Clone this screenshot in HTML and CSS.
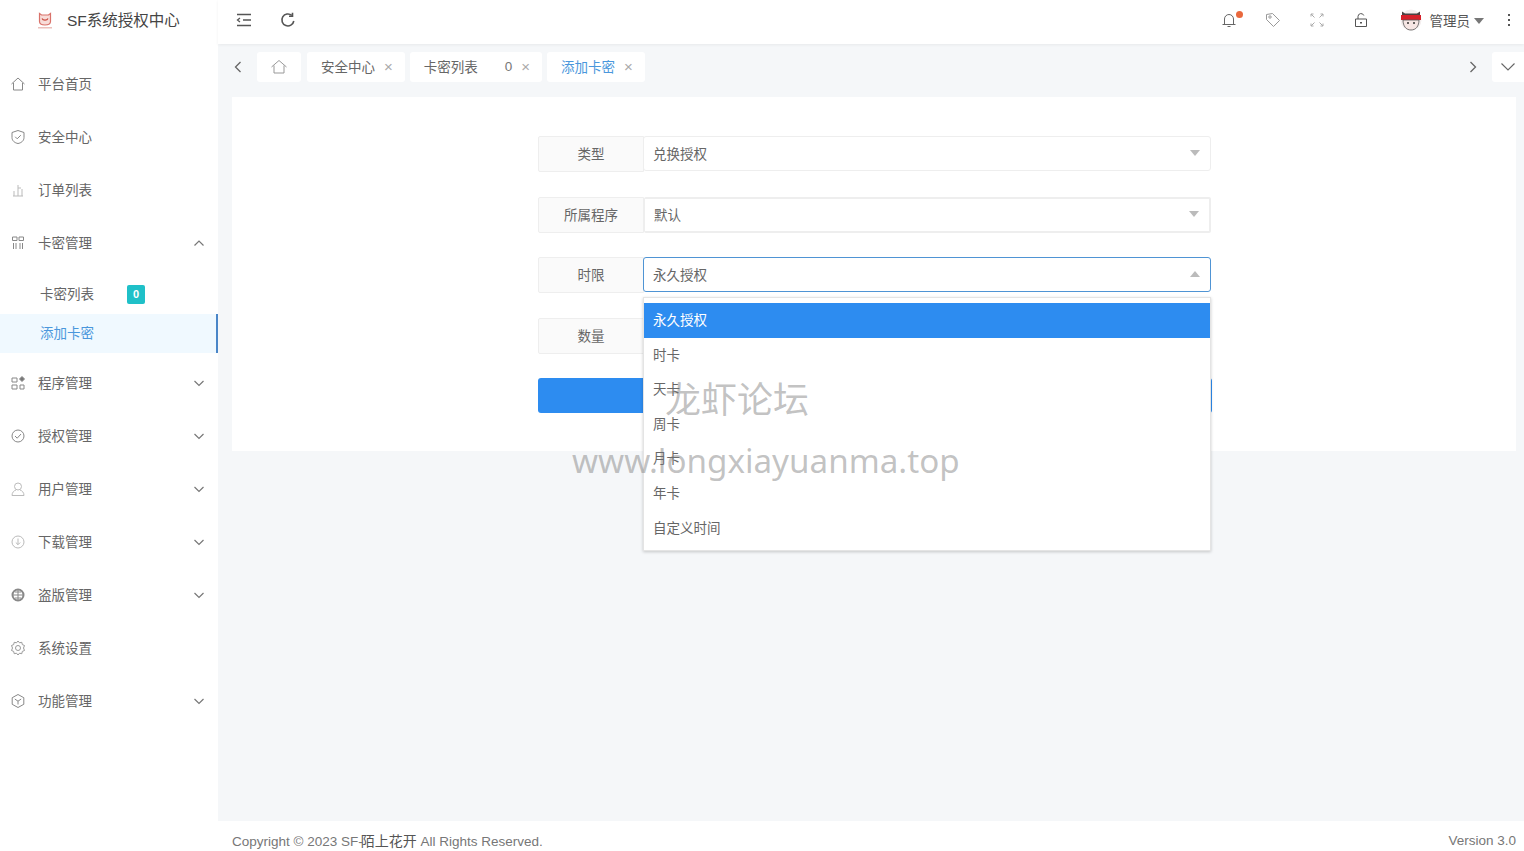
FILE: index.html
```html
<!DOCTYPE html>
<html lang="zh-CN">
<head>
    <meta charset="UTF-8">
    <meta name="viewport" content="width=device-width, initial-scale=1.0">
    <title>添加卡密</title>
    <link rel="stylesheet" href="styles.css">
</head>
<body>
    <div class="app">
        <aside class="sidebar">
            <div class="brand">
                <svg class="brand-logo" viewBox="0 0 18 18" width="18" height="18">
                    <path d="M3.500 1.500l2 1.500h7l2-1.500v8c0 2.500-2.500 3.500-5.500 3.500s-5.500-1-5.500-3.500z" fill="#f8dcd8" stroke="#d9726a" stroke-width="1.200"/>
                    <path d="M6 6.500c1 2.200 5 2.200 6 0" fill="none" stroke="#c8473c" stroke-width="1.200"/>
                    <rect x="2" y="15" width="14" height="1.500" fill="#ecc0bb"/>
                </svg>
                <span class="brand-name">SF系统授权中心</span>
            </div>
            <nav class="menu">
                <a class="menu-item">
                    <svg class="menu-icon" viewBox="0 0 16 16"><path d="M1.500 8L8 2l6.500 6M3.500 7v7h9V7"/></svg>
                    <span>平台首页</span>
                </a>
                <a class="menu-item">
                    <svg class="menu-icon" viewBox="0 0 16 16"><path d="M8 1.500l6 2v5c0 3.500-3 5.500-6 6-3-.5-6-2.500-6-6v-5z"/><path d="M5.200 7.800l2 2 3.600-3.600"/></svg>
                    <span>安全中心</span>
                </a>
                <a class="menu-item">
                    <svg class="menu-icon menu-icon-light" viewBox="0 0 16 16"><path d="M3 14h10M4 14V9M8 14V3M12 14V7M8 6h3"/></svg>
                    <span>订单列表</span>
                </a>
                <a class="menu-item">
                    <svg class="menu-icon" viewBox="0 0 16 16"><path d="M2.500 2h4.500v3.500H2.500zM9 2h4.500v3.500H9zM3.500 8v6M6 8v6M10 8v6M12.500 8v6"/></svg>
                    <span>卡密管理</span>
                    <svg class="chevron" viewBox="0 0 12 12"><path d="M1.500 8.500L6 4l4.500 4.500"/></svg>
                </a>
                <div class="submenu">
                    <a class="submenu-item"><span class="submenu-text">卡密列表</span><span class="badge">0</span></a>
                    <a class="submenu-item active"><span class="submenu-text">添加卡密</span></a>
                </div>
                <a class="menu-item">
                    <svg class="menu-icon" viewBox="0 0 16 16"><path d="M2 3h5v4H2zM2 10h5v4H2zM10 10h4v4h-4z"/><path class="icon-fill" d="M12 1.500l2.500 2.500-2.500 2.500L9.500 4z"/></svg>
                    <span>程序管理</span>
                    <svg class="chevron" viewBox="0 0 12 12"><path d="M1.500 4L6 8.500 10.500 4"/></svg>
                </a>
                <a class="menu-item">
                    <svg class="menu-icon" viewBox="0 0 16 16"><circle cx="8" cy="8" r="6"/><path d="M5 8l2.200 2.200L11 6"/></svg>
                    <span>授权管理</span>
                    <svg class="chevron" viewBox="0 0 12 12"><path d="M1.500 4L6 8.500 10.500 4"/></svg>
                </a>
                <a class="menu-item">
                    <svg class="menu-icon menu-icon-light" viewBox="0 0 16 16"><circle cx="8" cy="5.500" r="3.500"/><path d="M2 14.500c0-3 2-5 4-5.500M14 14.500c0-3-2-5-4-5.500M2 14.500h12"/></svg>
                    <span>用户管理</span>
                    <svg class="chevron" viewBox="0 0 12 12"><path d="M1.500 4L6 8.500 10.500 4"/></svg>
                </a>
                <a class="menu-item">
                    <svg class="menu-icon menu-icon-light" viewBox="0 0 16 16"><circle cx="8" cy="8" r="6"/><path d="M8 4.500v6M5.800 8.500L8 10.700l2.200-2.200"/></svg>
                    <span>下载管理</span>
                    <svg class="chevron" viewBox="0 0 12 12"><path d="M1.500 4L6 8.500 10.500 4"/></svg>
                </a>
                <a class="menu-item">
                    <svg class="menu-icon" viewBox="0 0 16 16"><circle cx="8" cy="8" r="5.500" stroke-width="2"/><path d="M3 8h10M8 3v10M5 5h6M5 11h6"/></svg>
                    <span>盗版管理</span>
                    <svg class="chevron" viewBox="0 0 12 12"><path d="M1.500 4L6 8.500 10.500 4"/></svg>
                </a>
                <a class="menu-item">
                    <svg class="menu-icon menu-icon-mid" viewBox="0 0 16 16"><circle cx="8" cy="8" r="2.500"/><path d="M8 1l1.500 1.800 2.300-.5.500 2.300 2.200.9-1 2.500 1 2.500-2.200.9-.5 2.300-2.300-.5L8 15l-1.500-1.800-2.300.5-.5-2.300-2.200-.9 1-2.500-1-2.500 2.200-.9.500-2.300 2.300.5z"/></svg>
                    <span>系统设置</span>
                </a>
                <a class="menu-item">
                    <svg class="menu-icon" viewBox="0 0 16 16"><path d="M8 1.500l5.800 3.200v6.600L8 14.500l-5.800-3.200V4.700z"/><path d="M4.800 6L8 8.200 11.200 6M8 8.200v3.300"/></svg>
                    <span>功能管理</span>
                    <svg class="chevron" viewBox="0 0 12 12"><path d="M1.500 4L6 8.500 10.500 4"/></svg>
                </a>
            </nav>
        </aside>

        <div class="main">
            <header class="topbar">
                <div class="topbar-group">
                    <span class="tool">
                        <svg class="tool-icon tool-dark tool-mid" viewBox="0 0 16 16"><path d="M1 2.500h14M7 8h8M1 13.500h14M4 6L1.500 8 4 10"/></svg>
                    </span>
                    <span class="tool">
                        <svg class="tool-icon tool-dark tool-bold" viewBox="0 0 16 16"><path d="M13.800 9A6 6 0 1 1 11.800 3.400"/><path d="M12.500 .8v3.500H9"/></svg>
                    </span>
                </div>
                <div class="topbar-group">
                    <span class="tool tool-bell">
                        <svg class="tool-icon tool-grey-dark" viewBox="0 0 16 16"><path d="M1.500 12.500h13M3.500 12.500V7a4.500 4.500 0 0 1 9 0v5.500M6.500 14.500h3"/></svg>
                        <i class="dot"></i>
                    </span>
                    <span class="tool">
                        <svg class="tool-icon tool-grey" viewBox="0 0 16 16"><path d="M1.500 2.500l6-1 7 7-6 6-7-7z"/><circle cx="5" cy="5" r="1.200"/></svg>
                    </span>
                    <span class="tool">
                        <svg class="tool-icon tool-light" viewBox="0 0 16 16"><path d="M2 2l3.500 3.500M2 2v2.500M2 2h2.500M14 2l-3.500 3.500M14 2v2.500M14 2h-2.500M2 14l3.500-3.500M2 14v-2.500M2 14h2.500M14 14l-3.500-3.500M14 14v-2.500M14 14h-2.500"/></svg>
                    </span>
                    <span class="tool">
                        <svg class="tool-icon tool-dark" viewBox="0 0 16 16"><path d="M2.500 7h11v7.500h-11zM5 7V4.500a3 3 0 0 1 5.800-1"/><path d="M8 10v1.500" stroke-width="2"/></svg>
                    </span>
                    <div class="user">
                        <svg class="avatar" viewBox="0 0 22 22">
                            <circle cx="11" cy="11" r="10.500" fill="#f4eeee"/>
                            <path d="M2 2.500l3 2h12l3-2v4H2z" fill="#4a4242"/>
                            <rect x="1" y="6" width="20" height="5" fill="#d5202a"/>
                            <path d="M3 11h16c0 6-3 10-8 10s-8-4-8-10z" fill="#f6e6e4" stroke="#555" stroke-width=".8"/>
                            <circle cx="8" cy="14" r="1" fill="#333"/>
                            <circle cx="14" cy="14" r="1" fill="#333"/>
                        </svg>
                        <span class="user-name">管理员</span>
                        <i class="caret"></i>
                    </div>
                    <span class="tool tool-more">
                        <i></i><i></i><i></i>
                    </span>
                </div>
            </header>

            <div class="tabsbar">
                <span class="tab-arrow">
                    <svg viewBox="0 0 12 12"><path d="M8.500 1L3.500 6l5 5"/></svg>
                </span>
                <div class="tabs">
                    <span class="tab tab-home">
                        <svg viewBox="0 0 16 16"><path d="M.5 8L8 1.500 15.500 8M3 6.500V14h10V6.500"/></svg>
                    </span>
                    <span class="tab"><span>安全中心</span><span class="tab-close">×</span></span>
                    <span class="tab">
                        <span>卡密列表</span><span class="tab-count">0</span><span class="tab-close">×</span>
                    </span>
                    <span class="tab tab-active"><span>添加卡密</span><span class="tab-close">×</span></span>
                </div>
                <span class="tab-arrow tab-arrow-right">
                    <svg viewBox="0 0 12 12"><path d="M3.500 1l5 5-5 5"/></svg>
                </span>
                <span class="tab-more">
                    <svg viewBox="0 0 16 16"><path d="M1.500 4.500L8 11l6.500-6.500"/></svg>
                </span>
            </div>

            <div class="content">
                <div class="card">
                    <form class="form">
                        <div class="form-row">
                            <label class="form-label">类型</label>
                            <div class="select"><span>兑换授权</span><i class="select-arrow"></i></div>
                        </div>
                        <div class="form-row">
                            <label class="form-label">所属程序</label>
                            <div class="select select-alt"><span>默认</span><i class="select-arrow"></i></div>
                        </div>
                        <div class="form-row">
                            <label class="form-label">时限</label>
                            <div class="select select-open"><span>永久授权</span><i class="select-arrow select-arrow-up"></i></div>
                            <ul class="dropdown">
                                <li class="selected">永久授权</li>
                                <li>时卡</li>
                                <li>天卡</li>
                                <li>周卡</li>
                                <li>月卡</li>
                                <li>年卡</li>
                                <li>自定义时间</li>
                            </ul>
                        </div>
                        <div class="form-row">
                            <label class="form-label">数量</label>
                            <div class="select"></div>
                        </div>
                        <button class="submit" type="button">添加</button>
                    </form>
                </div>
            </div>

            <footer class="footer">
                <span>Copyright © 2023 SF-<b>陌上花开</b> All Rights Reserved.</span>
                <span>Version 3.0</span>
            </footer>
        </div>
    </div>

    <div class="watermark">
        <div class="watermark-cn">龙虾论坛</div>
        <div class="watermark-url">www.longxiayuanma.top</div>
    </div>
</body>
</html>
```

FILE: styles.css
```css
* {
    box-sizing: border-box;
}

html, body {
    margin: 0;
    height: 100%;
    overflow: hidden;
}

body {
    font-family: "Liberation Sans", "Noto Sans CJK SC", sans-serif;
    font-size: 13.500px;
    color: #666;
    background-color: #f5f7f9;
}

.app {
    display: flex;
    height: 851px;
}

/* sidebar */
.sidebar {
    width: 218px;
    flex-shrink: 0;
    background: #fff;
}

.brand {
    display: flex;
    align-items: center;
    height: 44px;
    padding: 0 0 6px 36px;
    margin-bottom: 14px;
}

.brand-logo {
    margin: 4px 13px 0 0;
}

.brand-name {
    font-size: 15.500px;
    color: #444;
}

.menu-item {
    display: flex;
    align-items: center;
    height: 52.900px;
    padding: 0 13px 0 10px;
}

.menu-item span {
    margin: 0 0 2px 12px;
}

.menu-icon {
    width: 16px;
    height: 16px;
    fill: none;
    stroke: #888;
    stroke-width: 1;
}

.menu-icon-light {
    stroke: #bbb;
}

.menu-icon-mid {
    stroke: #999;
}

.icon-fill {
    fill: #777;
}

.chevron {
    width: 12px;
    height: 12px;
    margin-left: auto;
    fill: none;
    stroke: #777;
    stroke-width: 1.200;
}

.submenu {
    padding: 5px 0 4.200px;
}

.submenu-item {
    display: flex;
    align-items: center;
    height: 39px;
    padding-left: 40px;
}

.submenu-text {
    margin-bottom: 3px;
}

.submenu-item.active {
    color: #4a97dc;
    background: #f0f9ff;
    border-right: 2px solid #4a86c8;
}

.badge {
    width: 18px;
    height: 19px;
    margin: 1px 0 0 33px;
    border-radius: 2px;
    background: #1fc0c8;
    color: #fff;
    font-size: 11px;
    font-weight: bold;
    line-height: 19px;
    text-align: center;
}

/* main column */
.main {
    flex: 1;
    min-width: 0;
    display: flex;
    flex-direction: column;
}

.topbar {
    display: flex;
    align-items: center;
    justify-content: space-between;
    height: 44px;
    padding: 0 0 4px 4px;
    background: #fff;
    box-shadow: 0 1px 3px rgba(0, 0, 0, 0.06);
}

.topbar-group {
    display: flex;
    align-items: center;
}

.tool {
    position: relative;
    display: flex;
    align-items: center;
    justify-content: center;
    width: 44px;
    height: 40px;
}

.tool-icon {
    width: 16px;
    height: 16px;
    fill: none;
    stroke-width: 1;
}

.tool-dark {
    stroke: #555;
}

.tool-grey-dark {
    stroke: #666;
}

.tool-mid {
    stroke-width: 1.300;
}

.tool-bold {
    stroke-width: 1.600;
}

.tool-grey {
    stroke: #999;
}

.tool-light {
    stroke: #aaa;
}

.dot {
    position: absolute;
    top: 11px;
    left: 29px;
    width: 7px;
    height: 7px;
    border-radius: 50%;
    background: #e9683d;
}

.user {
    display: flex;
    align-items: center;
    margin-left: 17px;
}

.avatar {
    width: 22px;
    height: 22px;
    margin-right: 8px;
}

.user-name {
    color: #555;
}

.caret {
    width: 0;
    height: 0;
    margin: 1px 10px 0 4px;
    border-left: 5.500px solid transparent;
    border-right: 5.500px solid transparent;
    border-top: 6px solid #777;
}

.tool-more {
    width: 30px;
    flex-direction: column;
    gap: 3px;
}

.tool-more i {
    width: 2px;
    height: 2px;
    background: #555;
}

/* tabs */
.tabsbar {
    display: flex;
    align-items: flex-start;
    height: 53px;
    padding-top: 8px;
    flex-shrink: 0;
}

.tab-arrow {
    display: flex;
    align-items: center;
    justify-content: center;
    width: 39px;
    height: 30px;
}

.tab-arrow svg {
    width: 12px;
    height: 12px;
    fill: none;
    stroke: #666;
    stroke-width: 1.300;
}

.tab-arrow-right {
    width: 38px;
    margin-left: auto;
}

.tabs {
    display: flex;
    gap: 5px;
}

.tab {
    display: flex;
    align-items: center;
    height: 30px;
    padding: 0 12px 2px 14px;
    border-radius: 3px;
    background: #fff;
}

.tab-home {
    width: 44px;
    margin-right: 1px;
    padding: 0;
    justify-content: center;
}

.tab-home svg {
    width: 16px;
    height: 16px;
    fill: none;
    stroke: #999;
    stroke-width: 1;
}

.tab-active {
    color: #4a97dc;
}

.tab-count {
    margin-left: 27px;
    color: #777;
}

.tab-close {
    margin-left: 9px;
    color: #aaa;
    font-size: 15px;
    line-height: 1;
}

.tab-more {
    display: flex;
    align-items: center;
    justify-content: center;
    width: 32px;
    height: 30px;
    background: #fff;
    border-radius: 3px 0 0 3px;
}

.tab-more svg {
    width: 16px;
    height: 16px;
    fill: none;
    stroke: #666;
    stroke-width: 1.100;
}

/* form card */
.content {
    flex: 1;
    padding: 0 8px 0 14px;
}

.card {
    height: 354px;
    padding-top: 39px;
    background: #fff;
}

.form {
    width: 674px;
    margin-left: 306px;
}

.form-row {
    position: relative;
    display: flex;
    height: 36px;
    margin-bottom: 24.500px;
}

.form-label {
    width: 106px;
    flex-shrink: 0;
    border: 1px solid #eee;
    border-radius: 2px 0 0 2px;
    background: #fafafa;
    line-height: 36px;
    text-align: center;
}

.select {
    display: flex;
    align-items: center;
    justify-content: space-between;
    width: 568px;
    height: 35px;
    margin-left: -1px;
    padding: 0 10px 2px 9px;
    border: 1px solid #eee;
    border-radius: 3px;
    background: #fff;
}

.select-alt {
    width: 567px;
    height: 36px;
    margin-left: 0;
    border-width: 2px 2px 2px 1px;
    border-radius: 2px;
}

.select-open {
    border-color: #4f94d4;
}

.select-arrow {
    width: 0;
    height: 0;
    border-left: 5.500px solid transparent;
    border-right: 5.500px solid transparent;
    border-top: 6px solid #bbb;
}

.select-arrow-up {
    border-top: 0;
    border-bottom: 6px solid #bbb;
}

.dropdown {
    position: absolute;
    top: 40px;
    left: 105px;
    z-index: 5;
    width: 567.500px;
    margin: 0;
    padding: 5px 0 5px;
    border: 1px solid #e4e4e4;
    background: #fff;
    box-shadow: 0 1px 3px rgba(0, 0, 0, 0.2);
    list-style: none;
}

.dropdown li {
    height: 34.600px;
    padding-left: 9px;
    line-height: 35px;
}

.dropdown li.selected {
    background: #2d8cf0;
    color: #fff;
}

.submit {
    display: block;
    width: 674px;
    height: 35px;
    border: none;
    border-radius: 3px;
    background: #2d8cf0;
    color: #fff;
    font: inherit;
}

/* footer */
.footer {
    display: flex;
    justify-content: space-between;
    height: 30px;
    padding: 11px 8px 0 14px;
    background: #fff;
    color: #777;
    line-height: 18px;
}

.footer b {
    margin-left: -2px;
    font-size: 14px;
    font-weight: normal;
    color: #555;
}

/* watermark over everything */
.watermark {
    position: absolute;
    top: 0;
    left: 0;
    z-index: 10;
    pointer-events: none;
    color: rgba(120, 120, 120, 0.45);
}

.watermark-cn {
    position: absolute;
    top: 371px;
    left: 665px;
    width: 160px;
    font-family: "Noto Sans CJK SC", sans-serif;
    font-size: 36px;
    line-height: 52px;
}

.watermark-url {
    position: absolute;
    top: 439px;
    left: 572px;
    width: 430px;
    font-family: "Noto Sans", sans-serif;
    font-size: 33.200px;
    line-height: 44px;
}
```
